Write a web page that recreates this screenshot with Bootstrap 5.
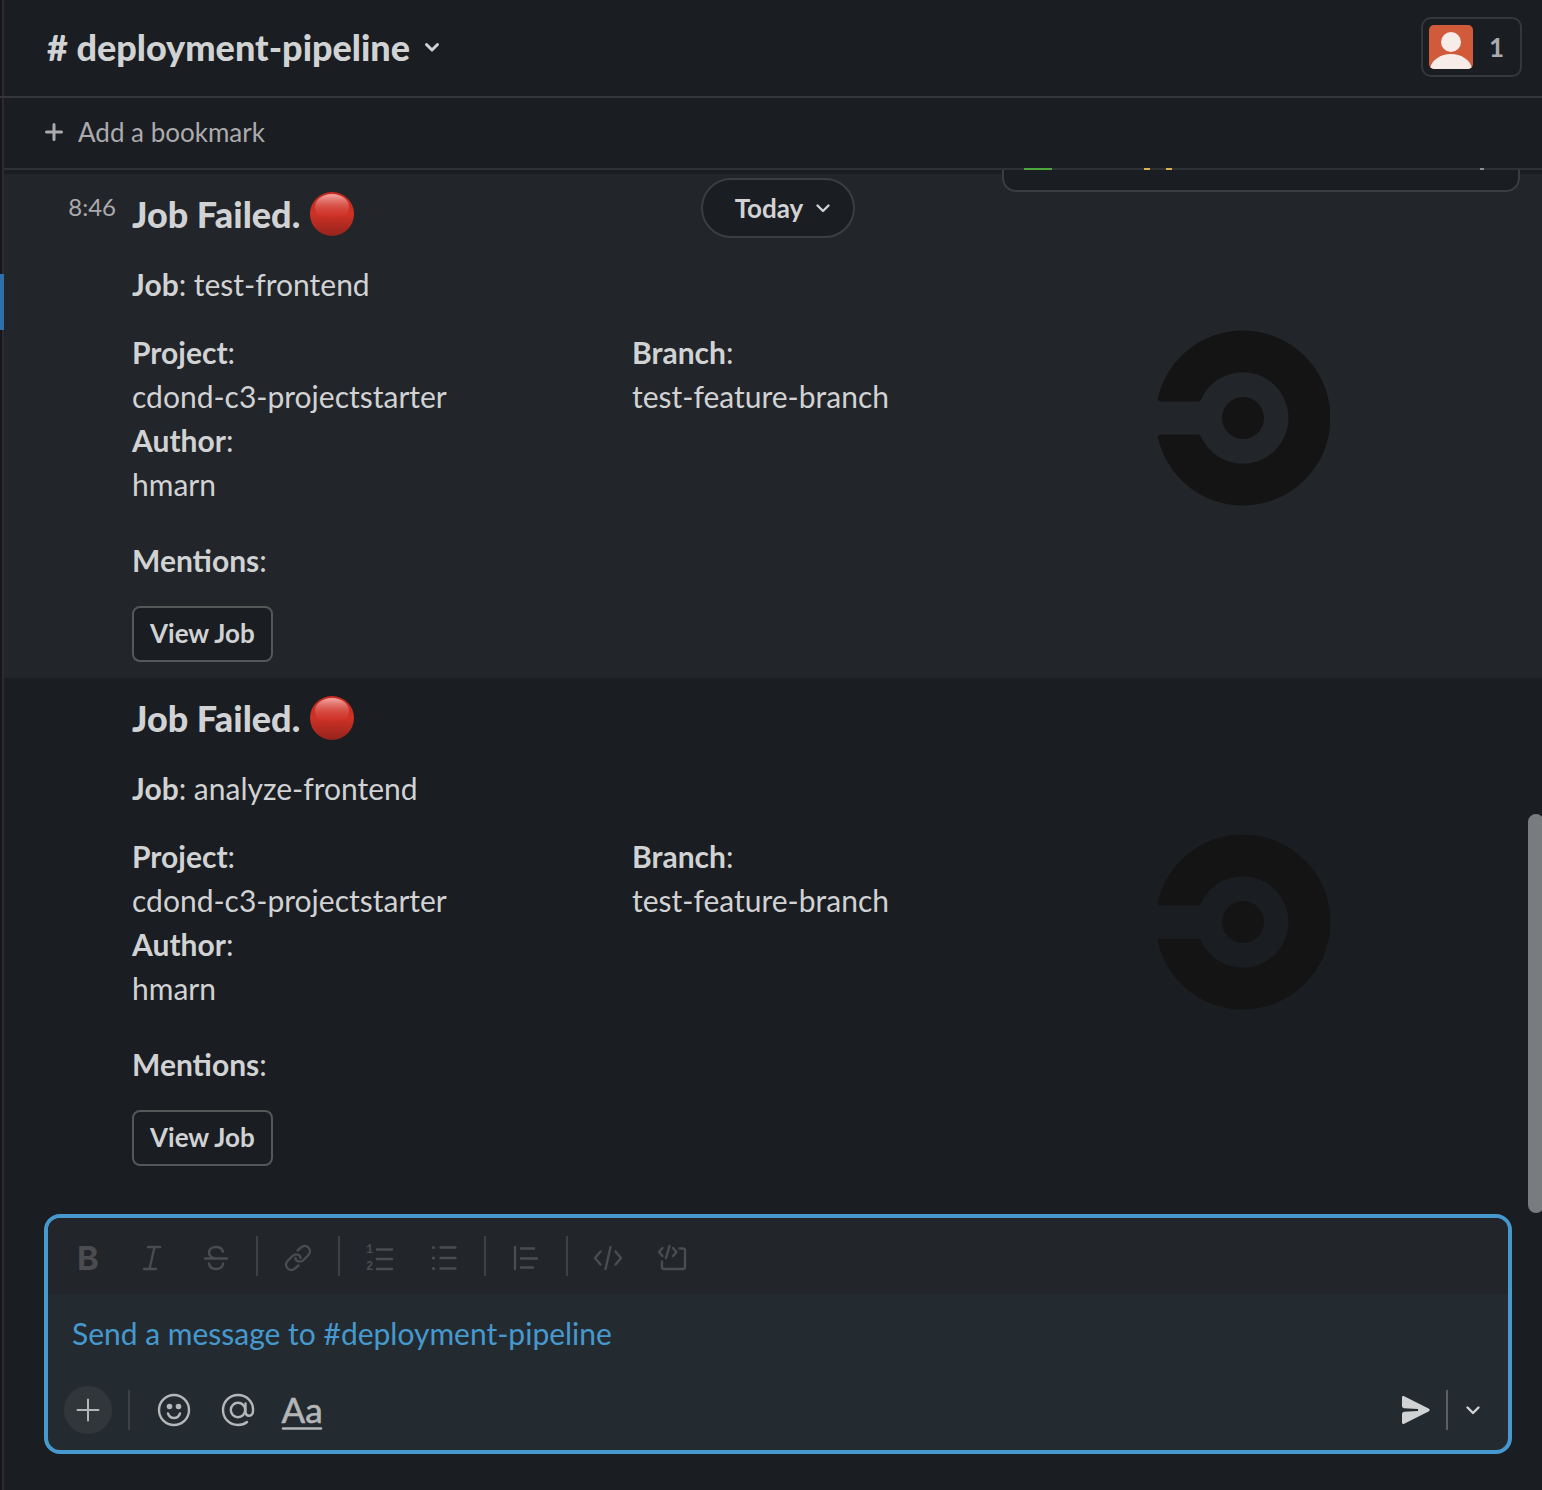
<!DOCTYPE html>
<html lang="en" data-bs-theme="dark">
<head>
<meta charset="utf-8">
<meta name="viewport" content="width=device-width, initial-scale=1">
<title>deployment-pipeline</title>
<link href="https://cdn.jsdelivr.net/npm/bootstrap@5.3.0/dist/css/bootstrap.min.css" rel="stylesheet">
<style>
:root{--pane:#1a1d21;--raised:#222529;--line:#35373b;--ink:#d1d2d3;--dim:#ababad;--accent:#4699cf}
body{background:var(--pane);color:var(--ink);font-family:Lato,"Liberation Sans",sans-serif;font-size:30px;line-height:44px}
svg{display:block;flex:none}
.stroke{fill:none;stroke:currentColor;stroke-width:2.4;stroke-linecap:round;stroke-linejoin:round}
.rail{width:4px;flex:none;background:linear-gradient(90deg,#19151c 50%,#2c2b30 50%)}
.rail-top{height:98px;border-bottom:2px solid var(--line)}
.rail-mark{height:56px;margin-top:176px;background:#3070a8}
.plain{background:none;border:0;padding:0;color:inherit;font:inherit}
h1,h2{color:var(--ink)}
.channel-head{height:98px;border-bottom:2px solid var(--line);padding:0 20px 2px 43px}
.channel-title{font-size:36px;font-weight:900;line-height:44px;gap:10px}
.members{height:60px;padding:0 16px 0 6px;border:2px solid var(--line);border-radius:10px;font-size:26px;font-weight:700;color:var(--dim)}
.bookmarks{height:70px;padding:0 0 2px 40px;font-size:26px;color:var(--dim)}
.bookmarks button{gap:14px}
.stream{padding-top:6px}
.stream::before{content:"";position:absolute;z-index:2;top:0;left:0;right:0;height:2px;background:#2f3235}
.hover-menu{position:absolute;top:-32px;right:22px;width:518px;height:56px;background:var(--pane);border:2px solid #3b3d41;border-radius:14px}
.hover-menu span{position:absolute;z-index:3;top:30px;height:2px}
.hm-green{left:20px;width:28px;background:#4aa53a}
.hm-gold{left:140px;width:28px;background:linear-gradient(90deg,#dcb050 6px,transparent 6px 22px,#dcb050 22px)}
.hm-dot{left:476px;width:4px;background:#8d8e90}
.day-bar{position:absolute;z-index:1;top:10px;left:40px;right:30px;pointer-events:none}
.day-pill{height:60px;padding:0 22px 0 32px;gap:12px;background:var(--pane);border:2px solid #3b3e41;border-radius:30px;font-size:26px;font-weight:700;pointer-events:auto}
.msg{padding:17px 30px 16px 0}
.msg-hover{background:var(--raised)}
.gutter{width:112px;margin-right:16px;flex:none;text-align:right;font-size:24px;line-height:32px;color:var(--dim)}
.msg-title{font-size:36px;font-weight:900;line-height:46px;margin-bottom:25px;gap:10px}
.job-line{margin-bottom:24px}
.facts{flex:0 1 1000px}
.logo-box{margin-left:22px}
.mention-line{margin:32px 0 24px}
.btn-job{height:56px;padding:0 16px 2px;background:var(--pane);color:var(--ink);border:2px solid #565759;border-radius:8px;font-size:26px;font-weight:700;line-height:36px}
.thumb{position:absolute;right:-2px;top:646px;bottom:1px;width:16px;border-radius:8px;background:#797c7f}
.composer-wrap{padding:0 30px 36px 40px}
.composer{border:4px solid var(--accent);border-radius:16px;background:#242b30;overflow:hidden}
.tools{height:76px;padding:0 12px;gap:8px;background:var(--raised);color:#4a4c50}
.tool{width:56px;height:56px;display:flex;align-items:center;justify-content:center}
.rule{width:2px;height:40px;background:#3d4044;flex:none}
.bold-mark{font-family:Inter,sans-serif;font-weight:700;font-size:33px;padding-top:4px}
.draft{display:block;width:100%;height:80px;padding:17px 24px;border:0;outline:0;resize:none;background:none;color:var(--ink);overflow:hidden}
.draft::placeholder{color:var(--accent);opacity:1}
.actions{padding:8px 19px 12px 16px;gap:8px;color:#b4b6b8}
.attach{width:48px;height:48px;background:#31363b}
.send-group{gap:2px}
.send-rule{background:#5c6063}
.later{padding:0 0 0 15px}
</style>
<script src="https://cdn.jsdelivr.net/npm/bootstrap@5.3.0/dist/js/bootstrap.bundle.min.js"></script>
</head>
<body>
<svg width="0" height="0" class="position-absolute" aria-hidden="true">
  <defs>
    <linearGradient id="ball" x1="0" y1="0" x2="0" y2="1"><stop offset="0" stop-color="#c92a20"/><stop offset=".5" stop-color="#cf3126"/><stop offset="1" stop-color="#95231b"/></linearGradient>
    <linearGradient id="shine" x1="0" y1="0" x2="0" y2="1"><stop offset="0" stop-color="#f3aaa5"/><stop offset="1" stop-color="#cf3126" stop-opacity="0"/></linearGradient>
    <symbol id="red-circle" viewBox="0 0 44 44"><circle cx="22" cy="22" r="22" fill="url(#ball)"/><ellipse cx="22" cy="15" rx="17" ry="13" fill="url(#shine)"/></symbol>
    <symbol id="ring-logo" viewBox="0 0 176 176"><g fill="#141414"><circle cx="89" cy="88" r="21"/><path d="M7 71.500C4.500 71.500 3.500 70 4 68C13 29 48 .5 89 .5A87.500 87.500 0 0 1 89 175.500C48 175.500 13 147 4 108C3.500 106 4.500 104.500 7 104.500H44Q46 104.500 47 106.500A45.700 45.700 0 1 0 47 69.500Q46 71.500 44 71.500Z"/></g></symbol>
    <symbol id="chevron" viewBox="0 0 16 16"><path class="stroke" d="M2.500 5.500 8 11l5.500-5.500"/></symbol>
  </defs>
</svg>
<div class="d-flex min-vh-100">
  <div class="rail"><div class="rail-top"></div><div class="rail-mark"></div></div>
  <main class="d-flex flex-column flex-grow-1">
    <header class="channel-head d-flex align-items-center justify-content-between">
      <h1 class="m-0"><button type="button" class="plain channel-title d-flex align-items-center"># deployment-pipeline<svg width="24" height="16" viewBox="0 0 24 16" aria-hidden="true"><path class="stroke" style="stroke-width:3" d="M6.500 5.500 12 11 17.500 5.500"/></svg></button></h1>
      <button type="button" class="plain members d-flex align-items-center gap-3" aria-label="1 member">
        <svg width="44" height="44" viewBox="0 0 44 44" aria-hidden="true"><defs><clipPath id="face"><rect width="44" height="44" rx="5"/></clipPath></defs><g clip-path="url(#face)"><path fill="#d05a39" d="M0 0h44v44H0z"/><circle cx="22" cy="17" r="10" fill="#f8ece9"/><path fill="#f8ece9" d="M1 44C2 35 12 29 22 29s20 6 21 15z"/></g></svg>
        <span>1</span>
      </button>
    </header>
    <div class="bookmarks d-flex align-items-center">
      <button type="button" class="plain d-flex align-items-center">
        <svg width="20" height="20" viewBox="0 0 20 20" aria-hidden="true"><path class="stroke" style="stroke-width:3" d="M10 2.500v15M2.500 10h15"/></svg>
        <span>Add a bookmark</span>
      </button>
    </div>
    <section class="stream flex-grow-1 position-relative overflow-hidden">
      <div class="hover-menu"><span class="hm-green"></span><span class="hm-gold"></span><span class="hm-dot"></span></div>
      <div class="day-bar d-flex justify-content-center">
        <button type="button" class="plain day-pill d-flex align-items-center">Today<svg width="16" height="16" aria-hidden="true"><use href="#chevron"/></svg></button>
      </div>
      <article class="msg msg-hover d-flex">
        <div class="gutter">8:46</div>
        <div class="flex-grow-1">
          <h2 class="msg-title d-flex align-items-center">Job Failed. <svg width="44" height="44" role="img" aria-label="red circle"><use href="#red-circle"/></svg></h2>
          <p class="job-line"><b>Job</b>: test-frontend</p>
          <div class="d-flex">
            <div class="facts row g-0">
              <div class="col-6"><b>Project</b>:<br>cdond-c3-projectstarter</div>
              <div class="col-6"><b>Branch</b>:<br>test-feature-branch</div>
              <div class="col-6"><b>Author</b>:<br>hmarn</div>
            </div>
            <svg class="logo-box" width="176" height="176" role="img" aria-label="CircleCI logo"><use href="#ring-logo"/></svg>
          </div>
          <p class="mention-line"><b>Mentions</b>:</p>
          <button type="button" class="btn btn-job">View Job</button>
        </div>
      </article>
      <article class="msg d-flex">
        <div class="gutter"></div>
        <div class="flex-grow-1">
          <h2 class="msg-title d-flex align-items-center">Job Failed. <svg width="44" height="44" role="img" aria-label="red circle"><use href="#red-circle"/></svg></h2>
          <p class="job-line"><b>Job</b>: analyze-frontend</p>
          <div class="d-flex">
            <div class="facts row g-0">
              <div class="col-6"><b>Project</b>:<br>cdond-c3-projectstarter</div>
              <div class="col-6"><b>Branch</b>:<br>test-feature-branch</div>
              <div class="col-6"><b>Author</b>:<br>hmarn</div>
            </div>
            <svg class="logo-box" width="176" height="176" role="img" aria-label="CircleCI logo"><use href="#ring-logo"/></svg>
          </div>
          <p class="mention-line"><b>Mentions</b>:</p>
          <button type="button" class="btn btn-job">View Job</button>
        </div>
      </article>
      <div class="thumb"></div>
    </section>
    <div class="composer-wrap">
      <form class="composer">
        <div class="tools d-flex align-items-center">
          <button type="button" class="plain tool bold-mark" aria-label="Bold">B</button>
          <button type="button" class="plain tool" aria-label="Italic"><svg width="36" height="36" viewBox="0 0 36 36"><path class="stroke" d="M14 9h12M10 31h12M20.500 9l-5 22"/></svg></button>
          <button type="button" class="plain tool" aria-label="Strikethrough"><svg width="36" height="36" viewBox="0 0 36 36"><path class="stroke" d="M7 20.500h22M25 13.500C24 10.500 21.500 9 18 9c-4 0-7 2-7 5.500 0 3.500 2.500 5 6 6M11 25.500C11.500 29 14.500 31 18 31c4 0 7-2 7-5.500"/></svg></button>
          <div class="rule mx-1"></div>
          <button type="button" class="plain tool" aria-label="Link"><svg width="36" height="36" viewBox="0 0 36 36"><path class="stroke" d="M17.500 12.500 21 9.500c5-4.500 12 2 7.500 7.500l-5 5c-3 3-8 1.500-8-2M18.500 27.500 15 30.500c-5 4.500-12-2-7.500-7.500l5-5c3-3 8-1.500 8 2"/></svg></button>
          <div class="rule mx-1"></div>
          <button type="button" class="plain tool" aria-label="Ordered list"><svg width="36" height="36" viewBox="0 0 36 36"><path class="stroke" d="M15 11.500h15M15 21h15M15 31h15"/><text x="4" y="15" font-family="Liberation Mono" font-weight="700" font-size="12" fill="currentColor">1</text><text x="4" y="32" font-family="Liberation Mono" font-weight="700" font-size="12" fill="currentColor">2</text></svg></button>
          <button type="button" class="plain tool" aria-label="Bulleted list"><svg width="36" height="36" viewBox="0 0 36 36"><path class="stroke" d="M14.500 9.500h15M14.500 20h15M14.500 30.500h15"/><path class="stroke" style="stroke-width:3.200" d="M7.500 9.500h.01M7.500 20h.01M7.500 30.500h.01"/></svg></button>
          <div class="rule mx-1"></div>
          <button type="button" class="plain tool" aria-label="Blockquote"><svg width="36" height="36" viewBox="0 0 36 36"><path class="stroke" d="M7 9v22M13 10.500h13M13 20.500h16M13 29.500h12"/></svg></button>
          <div class="rule mx-1"></div>
          <button type="button" class="plain tool" aria-label="Code"><svg width="36" height="36" viewBox="0 0 36 36"><path class="stroke" d="M10.500 13.500 5 20l5.500 6.500M25.500 13.500 31 20l-5.500 6.500M20.500 9l-5 22"/></svg></button>
          <button type="button" class="plain tool" aria-label="Code block"><svg width="36" height="36" viewBox="0 0 36 36"><path class="stroke" d="M8.500 10 5 14l3.500 4M19 10l3.500 4-3.500 4M15.500 8l-3.500 12M25.500 10.500H29q2 0 2 2V29q0 2-2 2H10q-2 0-2-2v-5.500"/></svg></button>
        </div>
        <textarea class="draft" rows="1" aria-label="Message" placeholder="Send a message to #deployment-pipeline"></textarea>
        <div class="actions d-flex align-items-center">
          <button type="button" class="plain attach rounded-circle d-flex align-items-center justify-content-center me-2" aria-label="Attach"><svg width="24" height="24" viewBox="0 0 24 24"><path class="stroke" style="stroke-width:2" d="M12 1.500v21M1.500 12h21"/></svg></button>
          <div class="rule me-2"></div>
          <button type="button" class="plain tool" aria-label="Emoji"><svg width="36" height="36" viewBox="0 0 36 36"><g class="stroke"><circle cx="18" cy="18" r="15"/><path d="M12 21.500c1 3 3.500 4.500 6 4.500s5-1.500 6-4.500"/></g><g fill="currentColor"><circle cx="13.500" cy="14.500" r="2.800"/><circle cx="22.500" cy="14.500" r="2.800"/></g></svg></button>
          <button type="button" class="plain tool" aria-label="Mention someone"><svg width="36" height="36" viewBox="0 0 36 36"><g class="stroke"><circle cx="18" cy="18" r="7.200"/><path d="M25.500 11.500V19c0 3 1.200 4.800 3.600 4.800 2.500 0 4-2.300 4-5.800 0-8.600-6.500-15-15.100-15S3 9.500 3 18s6.500 15 15 15c3.500 0 6.500-.8 9-3"/></g></svg></button>
          <button type="button" class="plain tool" aria-label="Hide formatting"><svg width="44" height="44" viewBox="0 0 44 44"><text x="22" y="35" text-anchor="middle" font-family="Lato" font-size="35" fill="currentColor" stroke="currentColor" stroke-width=".6">Aa</text><path class="stroke" d="M3 40.500h38"/></svg></button>
          <div class="send-group d-flex align-items-center ms-auto">
            <button type="submit" class="plain tool" aria-label="Send"><svg width="32" height="32" viewBox="0 0 32 32"><path fill="#d1d2d3" d="M2 3.500C2 2.200 3 1.700 4.200 2.300L29 14.800q1.700 1.200 0 2.400L4.200 29.700C3 30.300 2 29.800 2 28.500V20q0-2 2-2.300L18 17v-2L4 14.300Q2 14 2 12z"/></svg></button>
            <div class="rule send-rule"></div>
            <button type="button" class="plain later d-flex me-2" aria-label="Schedule for later"><svg width="16" height="16" color="#d1d2d3"><use href="#chevron"/></svg></button>
          </div>
        </div>
      </form>
    </div>
  </main>
</div>
</body>
</html>
